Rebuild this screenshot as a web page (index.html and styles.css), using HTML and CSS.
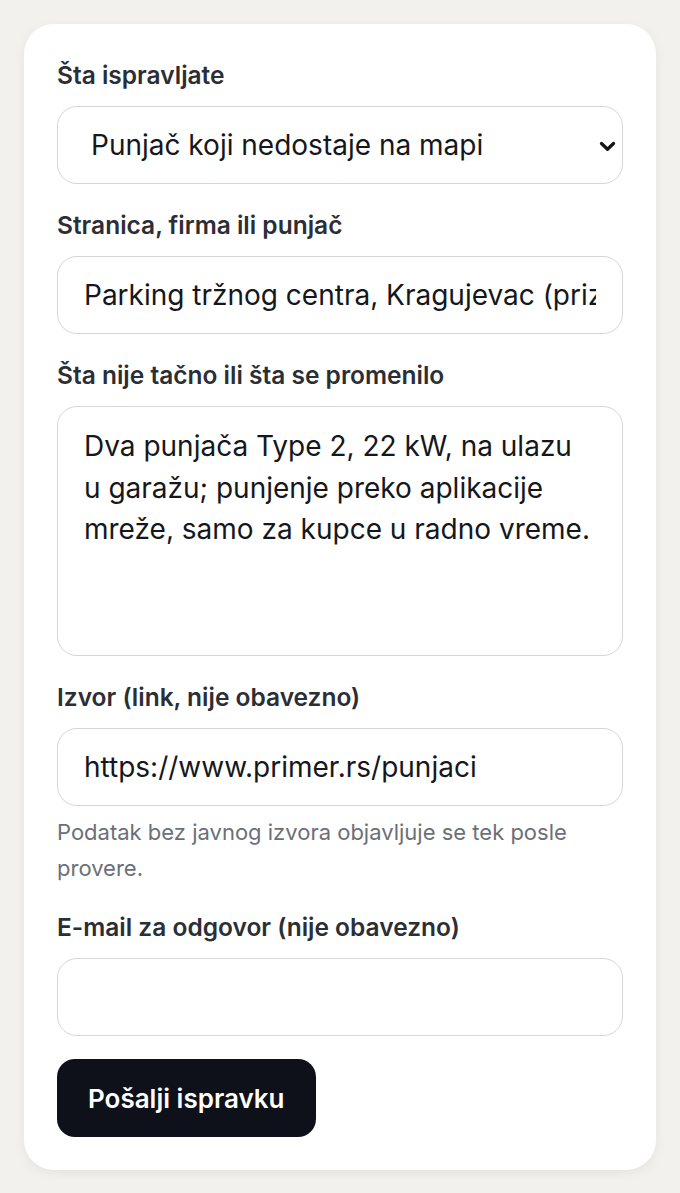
FILE: index.html
```html
<!DOCTYPE html>
<html lang="sr">
<head>
<meta charset="utf-8">
<title>Ispravka</title>
<link rel="stylesheet" href="styles.css">
</head>
<body>
<main class="page">
  <form class="card">
    <div class="field">
      <label class="label" for="f-type">Šta ispravljate</label>
      <div class="select-wrap">
        <select id="f-type" class="control select">
          <option>Punjač koji nedostaje na mapi</option>
        </select>
        <svg class="chevron" width="17" height="11" viewBox="0 0 17 11" aria-hidden="true"><path d="M2.5 2.5 L8.5 8.3 L14.5 2.5" fill="none" stroke="#15171c" stroke-width="3.3" stroke-linecap="round" stroke-linejoin="round"/></svg>
      </div>
    </div>
    <div class="field">
      <label class="label" for="f-page">Stranica, firma ili punjač</label>
      <input id="f-page" class="control" type="text" value="Parking tržnog centra, Kragujevac (prizemlje)">
    </div>
    <div class="field">
      <label class="label" for="f-what">Šta nije tačno ili šta se promenilo</label>
      <textarea id="f-what" class="control area">Dva punjača Type 2, 22 kW, na ulazu u garažu; punjenje preko aplikacije mreže, samo za kupce u radno vreme.</textarea>
    </div>
    <div class="field">
      <label class="label" for="f-src">Izvor (link, nije obavezno)</label>
      <input id="f-src" class="control" type="text" value="https://www.primer.rs/punjaci">
      <p class="hint">Podatak bez javnog izvora objavljuje se tek posle provere.</p>
    </div>
    <div class="field">
      <label class="label" for="f-mail">E-mail za odgovor (nije obavezno)</label>
      <input id="f-mail" class="control" type="email" value="">
    </div>
    <div class="actions">
      <button type="button" class="btn">Pošalji ispravku</button>
    </div>
  </form>
</main>
</body>
</html>
```
FILE: styles.css
```css
html, body {
  margin: 0;
  padding: 0;
  background: #f2f1ed;
}
body {
  font-family: Inter, "Noto Sans", "Liberation Sans", sans-serif;
  color: #14161b;
}
.page {
  padding: 24px;
}
.card {
  background: #ffffff;
  border-radius: 30px;
  box-shadow: 0 3px 12px rgba(0, 0, 0, 0.06);
  padding: 36px 33px 33px 33px;
  display: flex;
  flex-direction: column;
  gap: 26px;
}
.field {
  display: flex;
  flex-direction: column;
}
.label {
  font-size: 24.5px;
  line-height: 30px;
  font-weight: 600;
  color: #2c2e35;
  margin-bottom: 16px;
}
.control {
  box-sizing: border-box;
  width: 100%;
  height: 78px;
  border: 1.5px solid #d6d6d6;
  border-radius: 20px;
  background: #fff;
  font-family: inherit;
  font-size: 28px;
  color: #15171c;
  padding: 0 26px;
  outline: none;
}
.select-wrap {
  position: relative;
}
.select {
  appearance: none;
  -webkit-appearance: none;
  padding-left: 33px;
}
.chevron {
  position: absolute;
  right: 7px;
  top: 35px;
}
.area {
  height: 250px;
  padding: 19px 28px 19px 26px;
  line-height: 41.5px;
  resize: none;
}
.hint {
  margin: 8px 0 0 0;
  font-size: 22px;
  line-height: 36px;
  color: #6c6f77;
}
.actions {
  display: flex;
  margin-top: -3px;
}
.btn {
  height: 78px;
  padding: 0 31px;
  border: none;
  border-radius: 18px;
  background: #0e1119;
  color: #fff;
  font-family: inherit;
  font-size: 26px;
  font-weight: 600;
}
```
